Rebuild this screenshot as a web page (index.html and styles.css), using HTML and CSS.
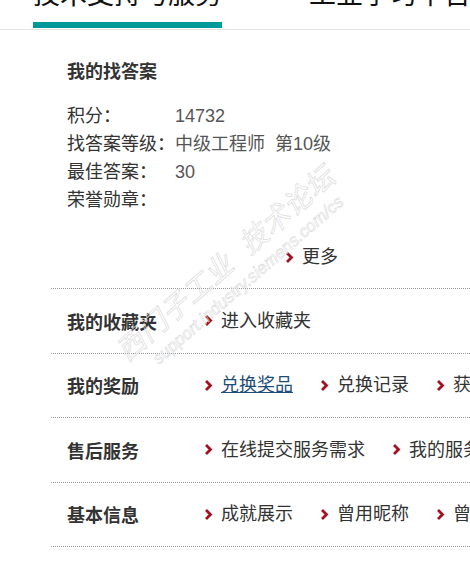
FILE: index.html
```html
<!DOCTYPE html>
<html lang="zh-CN">
<head>
  <meta charset="UTF-8" />
  <meta name="viewport" content="width=device-width, initial-scale=1" />
  <title>我的找答案</title>
  <link rel="stylesheet" href="styles.css">
</head>
<body>
  <div class="page">

    <nav class="tabs">
      <a class="tab active" href="#">技术支持与服务</a>
      <a class="tab" href="#">工业学习平台</a>
    </nav>

    <div class="content">
      <section class="block answers">
        <h2>我的找答案</h2>
        <table class="stats">
          <tr><td class="label">积分：</td><td class="value">14732</td></tr>
          <tr><td class="label">找答案等级：</td><td class="value">中级工程师&nbsp;&nbsp;第10级</td></tr>
          <tr><td class="label">最佳答案：</td><td class="value">30</td></tr>
          <tr><td class="label">荣誉勋章：</td><td class="value"></td></tr>
        </table>
        <a class="link more" href="#">
          <svg class="arrow" viewBox="0 0 9 11"><polyline points="2,1 6.5,5.5 2,10" /></svg>更多
        </a>
      </section>

      <div class="block row">
        <h3>我的收藏夹</h3>
        <div class="links">
          <a class="link" href="#"><svg class="arrow" viewBox="0 0 9 11"><polyline points="2,1 6.5,5.5 2,10" /></svg>进入收藏夹</a>
        </div>
      </div>

      <div class="block row">
        <h3>我的奖励</h3>
        <div class="links">
          <a class="link" href="#"><svg class="arrow" viewBox="0 0 9 11"><polyline points="2,1 6.5,5.5 2,10" /></svg><span class="visited">兑换奖品</span></a>
          <a class="link" href="#"><svg class="arrow" viewBox="0 0 9 11"><polyline points="2,1 6.5,5.5 2,10" /></svg>兑换记录</a>
          <a class="link" href="#"><svg class="arrow" viewBox="0 0 9 11"><polyline points="2,1 6.5,5.5 2,10" /></svg>获得积分记录</a>
        </div>
      </div>

      <div class="block row">
        <h3>售后服务</h3>
        <div class="links">
          <a class="link" href="#"><svg class="arrow" viewBox="0 0 9 11"><polyline points="2,1 6.5,5.5 2,10" /></svg>在线提交服务需求</a>
          <a class="link" href="#"><svg class="arrow" viewBox="0 0 9 11"><polyline points="2,1 6.5,5.5 2,10" /></svg>我的服务需求</a>
        </div>
      </div>

      <div class="block row">
        <h3>基本信息</h3>
        <div class="links">
          <a class="link" href="#"><svg class="arrow" viewBox="0 0 9 11"><polyline points="2,1 6.5,5.5 2,10" /></svg>成就展示</a>
          <a class="link" href="#"><svg class="arrow" viewBox="0 0 9 11"><polyline points="2,1 6.5,5.5 2,10" /></svg>曾用昵称</a>
          <a class="link" href="#"><svg class="arrow" viewBox="0 0 9 11"><polyline points="2,1 6.5,5.5 2,10" /></svg>曾用头像</a>
        </div>
      </div>
    </div>

    <!-- faint forum watermark over the content -->
    <div class="watermark">
      <div class="wm-title">西门子工业&nbsp;&nbsp;技术论坛</div>
      <div class="wm-url">support.industry.siemens.com/cs</div>
    </div>

  </div>
</body>
</html>
```

FILE: styles.css
```css
html, body {
  margin: 0;
  padding: 0;
  overflow: hidden;
  background-color: #fff;
}

body {
  font-family: "Liberation Sans", "Noto Sans CJK SC", sans-serif;
  color: #333;
}

.page {
  position: relative;
  width: 1000px;
}

/* top tabs, scrolled mostly out of view */
.tabs {
  display: flex;
  align-items: flex-start;
  gap: 87px;
  height: 29px;
  padding-left: 33px;
  border-bottom: 1px solid #e5e5e5;
}

.tab {
  display: block;
  margin-top: -18px;
  font-size: 27px;
  line-height: 27px;
  padding-bottom: 13px;
  color: #111;
  text-decoration: none;
  border-bottom: 6px solid transparent;
  white-space: nowrap;
}
.tab.active {
  border-bottom-color: #009999;
}

.content {
  margin-left: 51px;
}

.block {
  padding-left: 16px;
  border-bottom: 1px dotted #999;
}

.answers {
  padding-top: 30px;
  padding-bottom: 19px;
}

h2 {
  margin: 0 0 18px;
  font-size: 18px;
  line-height: 24px;
  font-weight: bold;
  color: #333;
}

.stats {
  border-collapse: collapse;
  font-size: 18px;
}
.stats td {
  padding: 0;
  height: 28px;
  line-height: 28px;
  white-space: nowrap;
}
.stats .label {
  color: #333;
}
.stats .value {
  color: #555;
}

.more {
  margin-top: 31px;
  padding-left: 218px;
}

.row {
  display: flex;
  align-items: center;
  height: 63.5px;
}

h3 {
  margin: 0;
  width: 137px;
  flex-shrink: 0;
  font-size: 18px;
  font-weight: bold;
  color: #333;
}

.links {
  display: flex;
  gap: 27px;
}

.link {
  display: flex;
  align-items: center;
  gap: 8px;
  font-size: 18px;
  line-height: 24px;
  color: #333;
  text-decoration: none;
  white-space: nowrap;
}

.link .visited {
  color: #1e4d78;
  text-decoration: underline;
}

.arrow {
  width: 9px;
  height: 11px;
  flex-shrink: 0;
}
.arrow polyline {
  fill: none;
  stroke: #a3101e;
  stroke-width: 2.8;
}

.watermark {
  position: absolute;
  left: 106px;
  top: 338px;
  transform: rotate(-41deg);
  transform-origin: left top;
  pointer-events: none;
  color: transparent;
  white-space: nowrap;
  font-style: italic;
}
.wm-title {
  font-size: 28px;
  letter-spacing: 1px;
  -webkit-text-stroke: 0.7px #dcdcdc;
}
.wm-url {
  margin-left: 22px;
  font-size: 17px;
  -webkit-text-stroke: 0.6px #dcdcdc;
}
```
